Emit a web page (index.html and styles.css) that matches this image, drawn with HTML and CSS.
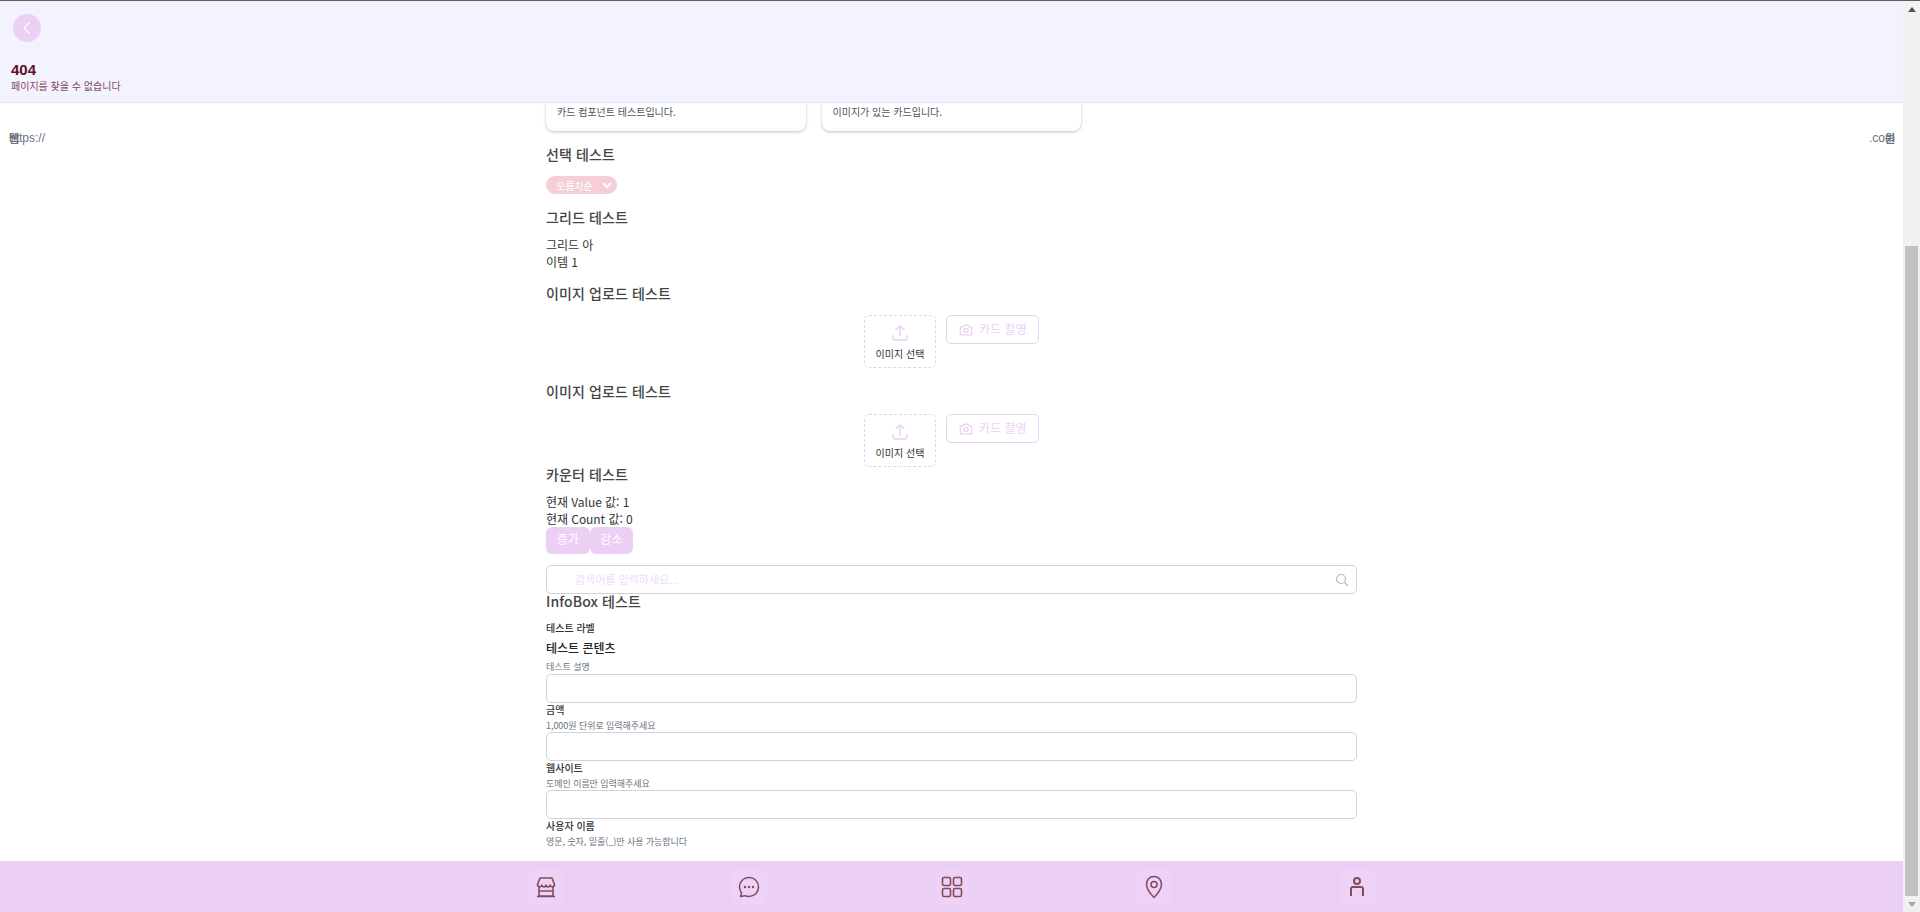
FILE: index.html
```html
<!DOCTYPE html>
<html lang="ko">
<head>
<meta charset="utf-8">
<title>404</title>
<link rel="stylesheet" href="styles.css">
</head>
<body>
<div class="app">
	<header class="top">
		<button class="back">
			<svg width="16" height="16" viewBox="0 0 16 16" fill="none" stroke="#fff" stroke-width="1.3"><path d="M10.5 2.500 5 8l5.500 5.500"/></svg>
		</button>
		<h1 class="top-title">404</h1>
		<p class="top-sub">페이지를 찾을 수 없습니다</p>
	</header>

	<main class="main">
		<div class="url-row">
			<span class="url-left"><i class="url-mark">웹</i>https://</span>
			<span class="url-right">.com<i class="url-mark right">원</i></span>
		</div>

		<div class="col">
			<div class="cards">
				<div class="card">카드 컴포넌트 테스트입니다.</div>
				<div class="card">이미지가 있는 카드입니다.</div>
			</div>

			<h2 class="sec first">선택 테스트</h2>
			<div class="select">오름차순
				<svg width="10" height="7" viewBox="0 0 10 7" fill="none" stroke="#fff" stroke-width="2"><path d="M1 1l4 4 4-4"/></svg>
			</div>

			<h2 class="sec grid-head">그리드 테스트</h2>
			<div class="txt">그리드 아<br>이템 1</div>

			<h2 class="sec up-head">이미지 업로드 테스트</h2>
			<div class="upload">
				<div class="drop">
					<svg width="18" height="18" viewBox="0 0 18 18" fill="none" stroke="#eccff5" stroke-width="1.4" stroke-linecap="round" stroke-linejoin="round"><path d="M9 12V2M5 5.500 9 2l4 3.500M2 11.500V14a2 2 0 0 0 2 2h10a2 2 0 0 0 2-2v-2.500"/></svg>
					<span>이미지 선택</span>
				</div>
				<div class="shot">
					<svg width="14" height="14" viewBox="0 0 16 16" fill="none" stroke="#eccff5" stroke-width="1.4" stroke-linejoin="round"><path d="M1.500 4.500h3L6 2.500h4l1.500 2h3v9h-13z"/><circle cx="8" cy="8.500" r="2.300"/></svg>
					<span>카드 촬영</span>
				</div>
			</div>

			<h2 class="sec next-up">이미지 업로드 테스트</h2>
			<div class="upload">
				<div class="drop">
					<svg width="18" height="18" viewBox="0 0 18 18" fill="none" stroke="#eccff5" stroke-width="1.4" stroke-linecap="round" stroke-linejoin="round"><path d="M9 12V2M5 5.500 9 2l4 3.500M2 11.500V14a2 2 0 0 0 2 2h10a2 2 0 0 0 2-2v-2.500"/></svg>
					<span>이미지 선택</span>
				</div>
				<div class="shot">
					<svg width="14" height="14" viewBox="0 0 16 16" fill="none" stroke="#eccff5" stroke-width="1.4" stroke-linejoin="round"><path d="M1.500 4.500h3L6 2.500h4l1.500 2h3v9h-13z"/><circle cx="8" cy="8.500" r="2.300"/></svg>
					<span>카드 촬영</span>
				</div>
			</div>

			<h2 class="sec counter-head">카운터 테스트</h2>
			<div class="txt">현재 Value 값: 1<br>현재 Count 값: 0</div>
			<div class="btns">
				<button class="btn">증가</button>
				<button class="btn">감소</button>
			</div>

			<div class="search">
				<span class="holder">검색어를 입력하세요...</span>
				<svg width="14" height="14" viewBox="0 0 14 14" fill="none" stroke="#b4b4be" stroke-width="1.100"><circle cx="6" cy="6" r="4.500"/><path d="m9.300 9.300 3.700 3.700"/></svg>
			</div>

			<h2 class="sec info-head">InfoBox 테스트</h2>
			<div class="lab info-lab">테스트 라벨</div>
			<div class="info-val">테스트 콘텐츠</div>
			<div class="hint info-hint">테스트 설명</div>
			<div class="field"></div>
			<div class="lab">금액</div>
			<div class="hint">1,000원 단위로 입력해주세요</div>
			<div class="field"></div>
			<div class="lab">웹사이트</div>
			<div class="hint">도메인 이름만 입력해주세요</div>
			<div class="field"></div>
			<div class="lab">사용자 이름</div>
			<div class="hint">영문, 숫자, 밑줄(_)만 사용 가능합니다</div>
		</div>
	</main>

	<nav class="nav">
		<div class="nav-in">
			<a class="nav-i"><svg width="24" height="24" viewBox="0 0 24 24" fill="none" stroke="#824b5a" stroke-width="1.600" stroke-linejoin="round"><path d="M5 12v9h14v-9M5 16h14M3 21.500h18"/><path d="M6 3h12l2.500 6.500c0 3-4 3-4.300.5-.3 2.500-4 2.500-4.200 0-.2 2.500-3.900 2.500-4.200 0C7.500 12.500 3.500 12.500 3.500 9.500z"/></svg></a>
			<a class="nav-i"><svg width="24" height="24" viewBox="0 0 24 24" fill="none" stroke="#824b5a" stroke-width="1.500" stroke-linejoin="round"><path d="M12 2.500c5.500 0 9.500 4 9.500 9.500s-4 9.500-9.500 9.500c-1.500 0-3-.3-4-.8l-4.500.8 1-3.500C3.300 16.300 2.500 14.300 2.500 12c0-5.500 4-9.500 9.500-9.500z"/><g fill="#824b5a" stroke="none"><circle cx="8" cy="12" r="1.200"/><circle cx="12" cy="12" r="1.200"/><circle cx="16" cy="12" r="1.200"/></g></svg></a>
			<a class="nav-i"><svg width="24" height="24" viewBox="0 0 24 24" fill="none" stroke="#824b5a" stroke-width="1.600"><rect x="2.500" y="2.500" width="8" height="8" rx="1.500"/><rect x="13.500" y="2.500" width="8" height="8" rx="1.500"/><rect x="2.500" y="13.500" width="8" height="8" rx="1.500"/><rect x="13.500" y="13.500" width="8" height="8" rx="1.500"/></svg></a>
			<a class="nav-i"><svg width="24" height="24" viewBox="0 0 24 24" fill="none" stroke="#824b5a" stroke-width="1.500" stroke-linejoin="round"><path d="M12 1.500c4.500 0 7.500 3.300 7.500 7.800 0 5-4 9.700-7.500 13.200-3.500-3.500-7.500-8.200-7.500-13.200 0-4.500 3-7.800 7.500-7.800z"/><circle cx="12" cy="9.500" r="3"/></svg></a>
			<a class="nav-i"><svg width="24" height="24" viewBox="0 0 24 24" fill="none" stroke="#824b5a" stroke-width="2"><circle cx="12" cy="6" r="3"/><path d="M6 21v-7a2 2 0 0 1 2-2h8a2 2 0 0 1 2 2v7"/></svg></a>
		</div>
	</nav>
</div>

<div class="sbar">
	<div class="sbar-arrow up"></div>
	<div class="sbar-thumb"></div>
	<div class="sbar-arrow down"></div>
</div>
</body>
</html>
```

FILE: styles.css
```css
html, body {
	margin: 0;
	height: 100%;
	overflow: hidden;
}

body {
	display: flex;
	font-family: "Noto Sans CJK KR", "Liberation Sans", sans-serif;
	color: #333;
	background: #fff;
	border-top: 1px solid #5f5f5f;
	box-sizing: border-box;
}

.app {
	flex: 1;
	min-width: 0;
	display: flex;
	flex-direction: column;
}

.top {
	height: 102px;
	box-sizing: border-box;
	flex: none;
	padding: 13px 11px 0;
	background: #f3f2ff;
	border-bottom: 1px solid #e5e0fa;
}

.back {
	display: flex;
	align-items: center;
	justify-content: center;
	width: 28px;
	height: 28px;
	margin: 0 0 0 2px;
	padding: 0;
	border: 0;
	border-radius: 50%;
	background: #eccff5;
}

.top-title {
	margin: 19px 0 0;
	font: bold 15px/18px "Liberation Sans", sans-serif;
	color: #5a1423;
}

.top-sub {
	margin: -1px 0 0;
	font-size: 10px;
	line-height: 16px;
	color: #824b5a;
}

.main {
	position: relative;
	flex: 1;
	min-height: 0;
	overflow: hidden;
}

.url-row {
	position: absolute;
	top: 26px;
	left: 9px;
	right: 8px;
	display: flex;
	justify-content: space-between;
	font: 12px/18px "Liberation Sans", sans-serif;
	color: #6b7280;
}

.url-left, .url-right {
	position: relative;
}

.url-mark {
	position: absolute;
	left: 0;
	top: 0;
	font-style: normal;
	font-size: 11px;
	font-weight: 700;
	font-family: "Noto Sans CJK KR", sans-serif;
}

.url-mark.right {
	left: auto;
	right: 0;
}

.col {
	width: 811px;
	margin: 0 auto;
}

.cards {
	display: flex;
	gap: 16px;
	width: 535px;
}

.card {
	flex: 1;
	height: 28px;
	box-sizing: border-box;
	padding: 0 11px;
	line-height: 18px;
	font-size: 10px;
	color: #4b5563;
	background: #fff;
	border-radius: 0 0 8px 8px;
	box-shadow: 0 1px 3px rgba(0, 0, 0, .25);
}

.sec {
	margin: 14px 0 0;
	font-size: 14px;
	font-weight: 500;
	line-height: 20px;
	letter-spacing: .1px;
	color: #444;
}

.sec.first {
	margin-top: 13px;
}

.grid-head {
	margin-top: 13px;
}

.select {
	display: flex;
	align-items: center;
	justify-content: space-between;
	width: 71px;
	height: 18px;
	box-sizing: border-box;
	margin: 12px 0 0;
	padding: 0 5px 0 10px;
	font-size: 10px;
	color: #fff;
	background: #f5ced8;
	border-radius: 9px;
}

.txt {
	margin-top: 10px;
	font-size: 12px;
	line-height: 16.500px;
	letter-spacing: -.05px;
	color: #333;
}

.up-head {
	margin-top: 13px;
}

.next-up {
	margin-top: 13px;
}

.upload {
	display: flex;
	align-items: flex-start;
	justify-content: center;
	gap: 10px;
	margin-top: 12px;
}

.next-up + .upload {
	margin-top: 13px;
}

.drop {
	display: flex;
	flex-direction: column;
	align-items: center;
	gap: 5px;
	width: 72px;
	height: 53px;
	box-sizing: border-box;
	padding-top: 8px;
	border: 1px dashed #eccff5;
	border-radius: 5px;
	font-size: 10px;
	line-height: 14px;
	color: #333;
}

.shot {
	display: flex;
	align-items: center;
	gap: 6px;
	width: 93px;
	height: 29px;
	box-sizing: border-box;
	padding-left: 12px;
	border: 1px solid #eccff5;
	border-radius: 5px;
	font-size: 12px;
	color: #eccff5;
}

.shot span {
	margin-top: -3px;
}

.counter-head {
	margin-top: -3px;
}

.btns {
	display: flex;
}

.btn {
	width: 43.500px;
	height: 27px;
	padding: 0 0 5px;
	border: 0;
	border-radius: 6px;
	font: 12px "Noto Sans CJK KR", sans-serif;
	color: #fff;
	background: #eccff5;
}

.search {
	display: flex;
	align-items: center;
	justify-content: space-between;
	height: 29px;
	box-sizing: border-box;
	margin-top: 11px;
	padding: 0 7px 0 28px;
	border: 1px solid #d1d1dc;
	border-radius: 5px;
}

.holder {
	margin-top: -2px;
	font-size: 11px;
	color: #f0dcf6;
}

.info-head {
	margin-top: -3px;
}

.lab {
	font-size: 10px;
	font-weight: 500;
	line-height: 14px;
	color: #333;
}

.info-lab {
	margin-top: 10px;
}

.info-val {
	margin-top: 5px;
	font-size: 12px;
	font-weight: 500;
	line-height: 16px;
	color: #222;
}

.hint {
	margin-top: 2px;
	font-size: 9px;
	line-height: 13px;
	letter-spacing: -.05px;
	color: #6b7280;
}

.info-hint {
	margin: 4px 0 1px;
}

.field {
	height: 29px;
	box-sizing: border-box;
	border: 1px solid #d1d1dc;
	border-radius: 5px;
}

.nav {
	flex: none;
	height: 51px;
	background: #eccff5;
}

.nav-in {
	display: flex;
	justify-content: space-between;
	width: 846px;
	margin: 0 auto;
	padding-top: 8px;
}

.nav-i {
	display: flex;
	align-items: center;
	justify-content: center;
	width: 35px;
	height: 36px;
	border-radius: 6px;
	background: #edd1f6;
}

.sbar {
	flex: none;
	display: flex;
	flex-direction: column;
	align-items: center;
	width: 17px;
	background: #f1f1f1;
}

.sbar-arrow {
	flex: none;
	height: 16px;
	display: flex;
	align-items: center;
}

.sbar-arrow::after {
	content: "";
	border: 4px solid transparent;
}

.sbar-arrow.up {
	margin-bottom: 229px;
}

.sbar-arrow.up::after {
	border-bottom: 5px solid #505050;
	border-top: 0;
}

.sbar-arrow.down::after {
	border-top: 5px solid #a3a3a3;
	border-bottom: 0;
}

.sbar-thumb {
	flex: 1;
	width: 13px;
	background: #c1c1c1;
}
```
